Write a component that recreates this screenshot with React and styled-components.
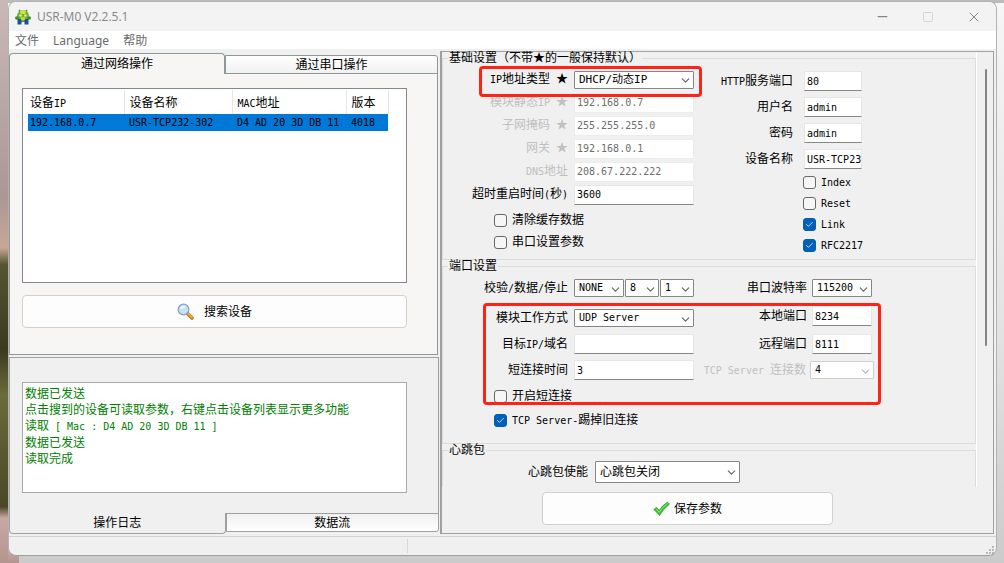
import { useState } from "react"
import styled, { createGlobalStyle, css } from "styled-components"
import { Check, ChevronDown, Minus, Square, X } from "lucide-react"

const GlobalStyle = createGlobalStyle`
  * {
    box-sizing: border-box;
  }
  body {
    margin: 0;
    font-family: "Liberation Sans", "Noto Sans CJK SC", sans-serif;
    font-size: 12px;
    line-height: 16px;
    color: #000;
  }
  button, input, select {
    font: inherit;
    color: inherit;
    margin: 0;
  }
`

const Mono = styled.span`
  font-family: "DejaVu Sans Mono", monospace;
  font-size: 10px;
  white-space: pre;
`

const Desktop = styled.div`
  display: flex;
  min-height: 100vh;
  padding: 1px 7px 7px 8px;
  background:
    linear-gradient(#c9b9b6, #ab9796 35%, #c8a796 44%, #55552f 47%, #3a3a20 62%, #6b6a3a 70%, #4a4726 90%, #c7a8a2 92%, #b3948f) 0 0 / 8px 100% no-repeat,
    linear-gradient(#c7a8a2, #b3948f) 0 100% / 19px 14px no-repeat,
    linear-gradient(#bdbabb, #bdbabb) 0 0 / 100% 3px no-repeat,
    linear-gradient(#f6f6f6, #e2e2e2 60%, #cbcbcb);
`

const Window = styled.div`
  display: flex;
  flex-direction: column;
  flex: 1;
  min-width: 0;
  border: 1px solid #b4b2b2;
  border-bottom-color: #9f9f9f;
  border-radius: 8px;
  overflow: hidden;
  background: #f0f0f0;
`

const TitleBar = styled.header`
  display: flex;
  align-items: center;
  height: 29px;
  padding: 0 14px 0 6px;
  background: #f3f3f3;
`

const Title = styled.h1`
  flex: 1;
  margin: 0 0 0 6px;
  font-family: "Open Sans", sans-serif;
  font-size: 12px;
  font-weight: 400;
  color: #858585;
`

const WindowButton = styled.button`
  display: flex;
  justify-content: center;
  align-items: center;
  width: 46px;
  height: 28px;
  padding: 0;
  border: 0;
  background: none;
  color: #858585;

  &:last-child {
    width: 16px;
    margin-left: 15px;
  }
  &:disabled {
    color: #d6d6d6;
  }
`

const MenuBar = styled.nav`
  display: flex;
  gap: 14px;
  height: 18px;
  padding-left: 6px;
  background: #fff;
  font-family: "Noto Sans", "Noto Sans CJK SC", sans-serif;
  line-height: 19px;

  a {
    color: #6a6a6a;
    text-decoration: none;
  }
`

const Main = styled.main`
  display: grid;
  grid-template-columns: minmax(0, 431fr) minmax(0, 554fr);
  flex: 1;
  padding: 2px 2px 2px 0;
`

const LeftColumn = styled.div`
  display: flex;
  flex-direction: column;
  gap: 2px;
  padding-top: 2px;
`

const Tabs = styled.div`
  display: grid;
  grid-template-columns: minmax(0, 215fr) minmax(0, 212fr);
  align-items: ${p => p.$bottom ? "start" : "end"};
  position: relative;
`

const Tab = styled.button`
  height: 19px;
  padding: 0;
  border: 1px solid #8f9899;
  background: linear-gradient(#fff, #f1f1f1);
  line-height: 16px;
  border-radius: ${p => p.$bottom ? "0 0 3px 0" : "0 3px 0 0"};
  ${p => p.$bottom ? "margin-top: -1px;" : "margin-bottom: -1px;"}

  ${p => p.$bottom && css`
    background: linear-gradient(#f0f0f0, #fff);
    border-color: #a0a0a0;
  `}

  ${p => p.$active && css`
    height: 21px;
    background: ${p.$bottom ? "#f0f0f0" : "#f7f6f5"};
    border-radius: ${p.$bottom ? "0 0 4px 4px" : "4px 4px 0 0"};
    ${p.$bottom ? "border-top: 0;" : "border-bottom: 0;"}
  `}
`

const UpperPane = styled.section`
  display: flex;
  flex-direction: column;
  padding-right: 2px;
`

const UpperPage = styled.div`
  display: flex;
  flex-direction: column;
  gap: 12px;
  padding: 14px 30px 26px 12px;
  border: 1px solid #8f9899;
  background: #f7f6f5;
`

const DeviceList = styled.div`
  min-height: 195px;
  padding: 1px 0 0 5px;
  border: 1px solid #828790;
  background: #fff;
`

const DeviceTable = styled.table`
  width: 360px;
  border-collapse: collapse;
  table-layout: fixed;

  th, td {
    padding: 0 0 0 5px;
    font-weight: 400;
    text-align: left;
    white-space: nowrap;
  }
  th {
    height: 24px;
    padding-top: 2px;
    border-right: 1px solid #e5e5e5;
  }
  th:first-child, td:first-child {
    padding-left: 2px;
  }
  td {
    height: 16px;
    line-height: 16px;
  }
  tbody tr {
    background: #0078d7;
  }
`

const ActionButton = styled.button`
  display: flex;
  justify-content: center;
  align-items: center;
  gap: ${p => p.$gap || 4}px;
  width: 100%;
  height: 33px;
  padding: 0;
  border: 1px solid #d0d0d0;
  border-radius: 4px;
  background: #fdfdfd;
`

const LowerPane = styled.section`
  display: flex;
  flex-direction: column;
  flex: 1;
  padding-right: 1px;
`

const LowerPage = styled.div`
  display: flex;
  flex: 1;
  padding: 24px 31px 20px 12px;
  border: 1px solid #a0a0a0;
`

const Log = styled.div`
  flex: 1;
  padding: 3px 2px;
  border: 1px solid #a9a9ad;
  background: #fff;
  color: #008000;

  p {
    margin: 0;
    white-space: nowrap;
  }
`

const Panel = styled.section`
  display: flex;
  flex-direction: column;
  border: 1px solid #a0a0a0;
  border-left-width: 2px;
`

const ScrollArea = styled.div`
  display: flex;
  flex: 1;
`

const Groups = styled.div`
  flex: 1;
  min-width: 0;
  border-right: 1px solid #fff;
`

const ScrollTrack = styled.div`
  flex: 0 0 16px;
  padding: 17px 6px 0 8px;

  div {
    height: 277px;
    border-radius: 1px;
    background: #858585;
  }
`

const Group = styled.fieldset`
  min-width: 0;
  margin: 0;
  padding: 0 0 ${p => p.$bottom || 0}px;
  border: 1px solid #dcdcdc;
  ${p => p.$open && "border-bottom: 0;"}

  legend {
    height: 12px;
    margin-left: 5px;
    padding: 0 1px;
    line-height: 13px;
  }
`

const Columns = styled.div`
  display: flex;
  position: relative;
  padding-top: ${p => p.$top}px;
`

const Row = styled.div`
  display: grid;
  grid-template-columns: ${p => p.$label}px ${p => p.$field}px;
  column-gap: ${p => p.$gap}px;
  align-items: center;
  height: ${p => p.$height}px;

  > label {
    display: flex;
    justify-content: flex-end;
    white-space: nowrap;
    color: ${p => p.$off ? "#c0c0c0" : "#000"};
  }
`

const Fields = styled.div`
  display: grid;
  grid-template-columns: 50px 34px 34px;
  gap: 1px;
`

const Input = styled.input`
  width: 100%;
  height: 20px;
  padding: 0 0 0 2px;
  border: 1px solid #e6e6e6;
  border-bottom-color: #868686;
  background: #fff;
  font-family: "DejaVu Sans Mono", "Noto Sans CJK SC", monospace;
  font-size: 10px;
  line-height: 16px;

  &:disabled {
    border-color: #ececec;
    color: #6d6d6d;
  }
`

const SelectBox = styled.span`
  display: grid;
  align-items: center;

  select, svg {
    grid-area: 1 / 1;
  }
  select {
    appearance: none;
    width: 100%;
    height: ${p => p.$tall ? 22 : 18}px;
    padding: 0 0 0 4px;
    border: 1px solid #868686;
    border-radius: 1px;
    background: #fff;
    font-family: "DejaVu Sans Mono", "Noto Sans CJK SC", monospace;
    font-size: ${p => p.$size || 10}px;
    line-height: 14px;
    opacity: 1;
  }
  select:disabled {
    border-color: #cfcfcf;
    color: #000;
  }
  svg {
    justify-self: end;
    margin: 2px 2px 0 0;
    color: ${p => p.$off ? "#b5b5b5" : "#606060"};
    pointer-events: none;
  }
`

const CheckLabel = styled.label`
  display: flex;
  align-items: center;
  gap: 5px;
  height: ${p => p.$height}px;
  padding-left: ${p => p.$indent}px;
  white-space: nowrap;
`

const CheckBox = styled.span`
  display: grid;
  place-items: center;

  input, svg {
    grid-area: 1 / 1;
  }
  input {
    appearance: none;
    width: 13px;
    height: 13px;
    border: 1px solid #686868;
    border-radius: 3px;
    background: #f6f6f6;
  }
  input:checked {
    border-color: #0060b8;
    background: #0060b8;
  }
  svg {
    display: none;
    color: #fff;
    pointer-events: none;
  }
  input:checked + svg {
    display: block;
  }
`

const Checks = styled.div`
  display: grid;
  gap: ${p => p.$gap || 0}px;
  padding-top: ${p => p.$top || 0}px;
`

/* red marker drawn over the form */
const Highlight = styled.div`
  position: absolute;
  left: ${p => p.$x}px;
  top: ${p => p.$y}px;
  width: ${p => p.$w}px;
  height: ${p => p.$h}px;
  border: 3px solid #ff2317;
  border-radius: 4px;
  pointer-events: none;
`

const PanelFooter = styled.div`
  padding: 5px 160px 8px 100px;
`

const StatusBar = styled.footer`
  display: grid;
  grid-template-columns: minmax(0, 399fr) minmax(0, 588fr);
  height: 19px;
  border-top: 1px solid #d2d2d2;

  span {
    margin: 2px 0;
    border-right: 1px solid #d7d7d7;
  }
  svg {
    place-self: end;
    margin: 0 2px 1px 0;
  }
`

// latin runs are set in the narrow mono face, everything else in the CJK one
function Text({ children }) {
  return children.split(/([\x20-\x7e]+)/).filter(Boolean).map((part, i) =>
    /^[\x20-\x7e]/.test(part) ? <Mono key={i}>{part}</Mono> : <span key={i}>{part}</span>
  )
}

function Select({ id, value, off, tall, size, label }) {
  return (
    <SelectBox $off={off} $tall={tall} $size={size}>
      <select id={id} aria-label={label} disabled={off} defaultValue={value}>
        <option>{value}</option>
      </select>
      <ChevronDown size={13} strokeWidth={2} />
    </SelectBox>
  )
}

function CheckItem({ text, checked, height, indent }) {
  const [on, setOn] = useState(!!checked)
  return (
    <CheckLabel $height={height} $indent={indent}>
      <CheckBox>
        <input type="checkbox" checked={on} onChange={() => setOn(!on)} />
        <Check size={9} strokeWidth={2} />
      </CheckBox>
      <span><Text>{text}</Text></span>
    </CheckLabel>
  )
}

function FormRow({ id, text, off, label, field, gap = 6, height, children }) {
  return (
    <Row $label={label} $field={field} $gap={gap} $height={height} $off={off}>
      <label htmlFor={id}><span><Text>{text}</Text></span></label>
      {children}
    </Row>
  )
}

function AppIcon() {
  return (
    <svg width="16" height="16" viewBox="0 0 16 16">
      <path d="M4 1 6 4M12 1l-2 3" stroke="#4f9a22" strokeWidth="1.5" />
      <ellipse cx="8" cy="7" rx="6" ry="6" fill="#67b52c" />
      <path d="M5 2.500Q8-.5 11 2.500L10 5H6Z" fill="#d9de45" />
      <circle cx="1.800" cy="9" r="1.800" fill="#3f8f22" />
      <circle cx="14.200" cy="9" r="1.800" fill="#3f8f22" />
      <circle cx="5.500" cy="6.500" r="1.300" fill="#e4efa0" />
      <circle cx="10.500" cy="6.500" r="1.300" fill="#e4efa0" />
      <path d="M2.500 10H6l2 1 2-1h3.500v5.500H9.500v-3h-3v3h-4Z" fill="#1c5292" />
      <path d="M6 8h4v3l-2 1-2-1Z" fill="#c5d536" />
    </svg>
  )
}

function SearchIcon() {
  return (
    <svg width="17" height="17" viewBox="0 0 17 17">
      <path d="m10.500 10.500 4.500 4.500" stroke="#b56a14" strokeWidth="3.500" strokeLinecap="round" />
      <path d="m11 10.500 4 4" stroke="#f7a936" strokeWidth="2" strokeLinecap="round" />
      <circle cx="6.500" cy="6.500" r="5.300" fill="#c4e2f8" stroke="#8b9fc4" strokeWidth="1.300" />
      <path d="M3 6.500Q3.500 3 7 3q3 1-.5 2T3 6.500Z" fill="#f3fbff" />
    </svg>
  )
}

function SaveIcon() {
  return (
    <svg width="17" height="16" viewBox="0 0 17 16">
      <path d="M.8 8.500 3.500 6.500 6.200 9.500Q9.500 4 14.500 1.200L16.400 3.200Q10.500 7.500 6.500 14.500Q4 11 .8 8.500Z" fill="#38c32f" stroke="#239e20" strokeWidth=".8" />
      <path d="m3 7.800 3.200 3.500Q9.500 6 14.500 2.500" fill="none" stroke="#8ceb78" />
    </svg>
  )
}

const log = [
  "数据已发送",
  "点击搜到的设备可读取参数，右键点击设备列表显示更多功能",
  "读取 [ Mac : D4 AD 20 3D DB 11 ]",
  "数据已发送",
  "读取完成",
]

const network = [
  { id: "static-ip", text: "模块静态IP ★", value: "192.168.0.7", off: true },
  { id: "mask", text: "子网掩码 ★", value: "255.255.255.0", off: true },
  { id: "gateway", text: "网关 ★", value: "192.168.0.1", off: true },
  { id: "dns", text: "DNS地址", value: "208.67.222.222", off: true },
  { id: "timeout", text: "超时重启时间(秒)", value: "3600" },
]

const account = [
  { id: "http-port", text: "HTTP服务端口", value: "80" },
  { id: "user", text: "用户名", value: "admin" },
  { id: "password", text: "密码", value: "admin" },
  { id: "device-name", text: "设备名称", value: "USR-TCP23" },
]

const gripDots = [[6, 0], [3, 3], [6, 3], [0, 6], [3, 6], [6, 6]]

function App() {
  return (
    <Desktop>
      <GlobalStyle />
      <Window>
        <TitleBar>
          <AppIcon />
          <Title>USR-M0 V2.2.5.1</Title>
          <WindowButton aria-label="Minimize"><Minus size={15} strokeWidth={2} /></WindowButton>
          <WindowButton aria-label="Maximize" disabled><Square size={12} strokeWidth={2} /></WindowButton>
          <WindowButton aria-label="Close"><X size={18} strokeWidth={1.5} /></WindowButton>
        </TitleBar>
        <MenuBar>
          <a href="#file">文件</a>
          <a href="#language">Language</a>
          <a href="#help">帮助</a>
        </MenuBar>

        <Main>
          <LeftColumn>
            <UpperPane>
              <Tabs>
                <Tab $active>通过网络操作</Tab>
                <Tab>通过串口操作</Tab>
              </Tabs>
              <UpperPage>
                <DeviceList>
                  <DeviceTable>
                    <colgroup>
                      <col width="96" />
                      <col width="108" />
                      <col width="114" />
                      <col width="42" />
                    </colgroup>
                    <thead>
                      <tr>
                        <th><Text>设备IP</Text></th>
                        <th>设备名称</th>
                        <th><Text>MAC地址</Text></th>
                        <th>版本</th>
                      </tr>
                    </thead>
                    <tbody>
                      <tr>
                        <td><Text>192.168.0.7</Text></td>
                        <td><Text>USR-TCP232-302</Text></td>
                        <td><Text>D4 AD 20 3D DB 11</Text></td>
                        <td><Text>4018</Text></td>
                      </tr>
                    </tbody>
                  </DeviceTable>
                </DeviceList>
                <ActionButton $gap={10}><SearchIcon />搜索设备</ActionButton>
              </UpperPage>
            </UpperPane>
            <LowerPane>
              <LowerPage>
                <Log role="log">
                  {log.map((line, i) => <p key={i}><Text>{line}</Text></p>)}
                </Log>
              </LowerPage>
              <Tabs $bottom>
                <Tab $bottom $active>操作日志</Tab>
                <Tab $bottom>数据流</Tab>
              </Tabs>
            </LowerPane>
          </LeftColumn>

          <Panel>
            <ScrollArea>
              <Groups>
                <Group $bottom={3}>
                  <legend>基础设置（不带★的一般保持默认）</legend>
                  <Columns $top={4}>
                    <div>
                      <FormRow id="ip-type" text="IP地址类型 ★" label={125} field={120} height={23}>
                        <Select id="ip-type" value="DHCP/动态IP" size={11} />
                      </FormRow>
                      {network.map(item => (
                        <FormRow key={item.id} {...item} label={125} field={120} height={23}>
                          <Input id={item.id} defaultValue={item.value} disabled={item.off} />
                        </FormRow>
                      ))}
                      <Checks $top={3}>
                        <CheckItem text="清除缓存数据" height={22} indent={51} />
                        <CheckItem text="串口设置参数" height={22} indent={51} />
                      </Checks>
                    </div>
                    <div>
                      {account.map(item => (
                        <FormRow key={item.id} {...item} label={99} field={58} gap={11} height={26}>
                          <Input id={item.id} defaultValue={item.value} />
                        </FormRow>
                      ))}
                      <Checks>
                        <CheckItem text="Index" height={21} indent={109} />
                        <CheckItem text="Reset" height={21} indent={109} />
                        <CheckItem text="Link" height={21} indent={109} checked />
                        <CheckItem text="RFC2217" height={21} indent={109} checked />
                      </Checks>
                    </div>
                    <Highlight $x={36} $y={2} $w={223} $h={31} />
                  </Columns>
                </Group>

                <Group $bottom={12}>
                  <legend>端口设置</legend>
                  <Columns $top={2}>
                    <div>
                      <FormRow id="parity" text="校验/数据/停止" label={125} field={120} height={28}>
                        <Fields>
                          <Select id="parity" value="NONE" />
                          <Select label="数据" value="8" />
                          <Select label="停止" value="1" />
                        </Fields>
                      </FormRow>
                      <FormRow id="mode" text="模块工作方式" label={125} field={120} height={32}>
                        <Select id="mode" value="UDP Server" />
                      </FormRow>
                      <FormRow id="target" text="目标IP/域名" label={125} field={120} height={20}>
                        <Input id="target" />
                      </FormRow>
                      <FormRow id="short-time" text="短连接时间" label={125} field={120} height={32}>
                        <Input id="short-time" defaultValue="3" />
                      </FormRow>
                      <Checks $gap={3}>
                        <CheckItem text="开启短连接" height={20} indent={51} />
                        <CheckItem text="TCP Server-踢掉旧连接" height={22} indent={51} checked />
                      </Checks>
                    </div>
                    <div>
                      <FormRow id="baud" text="串口波特率" label={113} field={60} gap={5} height={28}>
                        <Select id="baud" value="115200" />
                      </FormRow>
                      <FormRow id="local-port" text="本地端口" label={113} field={60} gap={5} height={28}>
                        <Input id="local-port" defaultValue="8234" />
                      </FormRow>
                      <FormRow id="remote-port" text="远程端口" label={113} field={60} gap={5} height={28}>
                        <Input id="remote-port" defaultValue="8111" />
                      </FormRow>
                      <FormRow id="max-conn" text="TCP Server 连接数" off label={112} field={64} gap={4} height={24}>
                        <Select id="max-conn" value="4" off />
                      </FormRow>
                    </div>
                    <Highlight $x={40} $y={31} $w={398} $h={102} />
                  </Columns>
                </Group>

                <Group $open>
                  <legend>心跳包</legend>
                  <FormRow id="heartbeat" text="心跳包使能" label={145} field={145} gap={7} height={31}>
                    <Select id="heartbeat" value="心跳包关闭" tall size={12} />
                  </FormRow>
                </Group>
              </Groups>
              <ScrollTrack><div /></ScrollTrack>
            </ScrollArea>
            <PanelFooter>
              <ActionButton><SaveIcon />保存参数</ActionButton>
            </PanelFooter>
          </Panel>
        </Main>

        <StatusBar>
          <span />
          <svg width="8" height="8">
            {gripDots.map(([x, y]) => <rect key={`${x}-${y}`} x={x} y={y} width="2" height="2" fill="#b8b8b8" />)}
          </svg>
        </StatusBar>
      </Window>
    </Desktop>
  )
}

export default App
